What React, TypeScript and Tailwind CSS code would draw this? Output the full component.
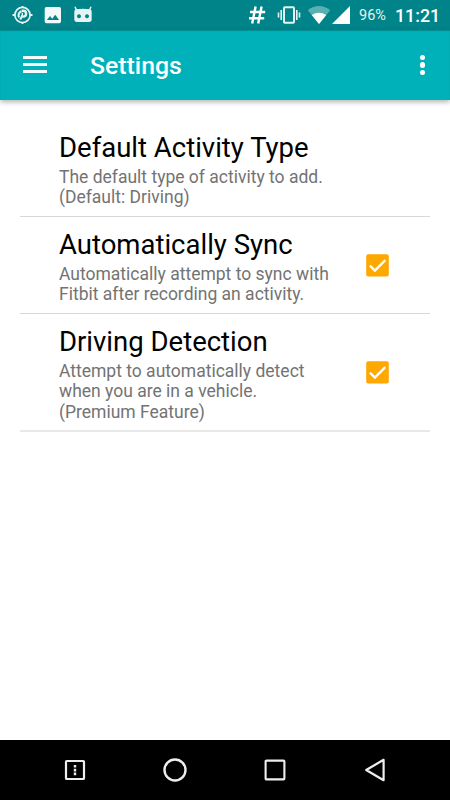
const settings = [
  {
    title: 'Default Activity Type',
    summary: ['The default type of activity to add.', '(Default: Driving)'],
    checkbox: false,
  },
  {
    title: 'Automatically Sync',
    summary: ['Automatically attempt to sync with', 'Fitbit after recording an activity.'],
    checkbox: true,
  },
  {
    title: 'Driving Detection',
    summary: ['Attempt to automatically detect', 'when you are in a vehicle.', '(Premium Feature)'],
    checkbox: true,
  },
];

function StatusBar() {
  return (
    <header className="flex h-[30px] items-center bg-[#008489] text-white">
      {/* Notifications */}
      <svg className="ml-[12px] h-[20px] w-[21px]" viewBox="0 0 21 20" fill="none" stroke="#e6f3f3">
        <circle cx="10.5" cy="10" r="7.6" strokeWidth="1.7" />
        <path d="M0.5 10h2.5M18 10h2.5M10.5 1v2M10.5 17v2" strokeWidth="1.8" />
        <path d="M8.2 14.6L10.4 10.6M7.2 12.4A4.2 4.2 0 0 1 9.4 6.2" strokeWidth="2.1" />
        <path d="M9.6 5.8h1.6a2.8 2.8 0 0 1 0 5.8h-.9" strokeWidth="2.4" />
        <path d="M10.3 7.8v3.2" strokeWidth="1.4" />
      </svg>
      <svg className="ml-[11px] h-[18px] w-[18px]" viewBox="0 0 18 18">
        <path
          fill="#f3f9f9"
          fillRule="evenodd"
          d="M2.5 1h12.7a1.8 1.8 0 0 1 1.8 1.8v12.6a1.8 1.8 0 0 1-1.8 1.8H2.5a1.8 1.8 0 0 1-1.8-1.8V2.8A1.8 1.8 0 0 1 2.5 1zM2.9 14h12.2l-3.9-5.2-3 3.9-2.2-2.6z"
        />
      </svg>
      <svg className="ml-[11px] h-[18px] w-[20px]" viewBox="0 0 20 18">
        <path d="M2 0.8l1.4 3.2M18 0.8L16.6 4" stroke="#e6f3f3" strokeWidth="1.5" />
        <path
          fill="#e6f3f3"
          fillRule="evenodd"
          d="M2.9 3.3q7.1-1.2 14.2 0 1.4.4 1.6 2.2v.8H1.3v-.8q.2-1.8 1.6-2.2zM1.3 6.3h17.4v7q0 2.7-2.7 2.7H4q-2.7 0-2.7-2.7zM6 8.2a2 2 0 1 0 .01 0zM14 8.2a2 2 0 1 0 .01 0z"
        />
      </svg>

      {/* System indicators */}
      <svg className="ml-auto h-[20px] w-[18px]" viewBox="0 0 18 20" fill="none" stroke="#fff" strokeWidth="2.4">
        <path d="M7.6 1.5L4.2 18.5M13.6 1.5l-3.4 17M2 7h15.2M1 13.2h15.2" />
      </svg>
      <svg className="ml-[11px] h-[20px] w-[24px]" viewBox="0 0 24 20" fill="none" stroke="#e6f3f3" strokeWidth="1.6">
        <rect x="7" y="2.3" width="10" height="15.4" rx="0.8" strokeWidth="2" />
        <path d="M4.2 5v10M1.5 7.5v5M19.8 5v10M22.5 7.5v5" />
      </svg>
      <svg className="ml-[6px] h-[20px] w-[24px]" viewBox="0 0 24 20">
        <path d="M12 19L.8 5.2Q12-3 23.2 5.2z" fill="#fff" fillOpacity="0.35" />
        <path d="M12 19L4.7 10Q12 5.5 19.3 10z" fill="#fff" />
      </svg>
      <svg className="h-[18px] w-[19px]" viewBox="0 0 19 18">
        <path d="M1 18L19 0v18z" fill="#fff" />
      </svg>
      <span className="ml-[9px] w-[29px] whitespace-nowrap pt-[2px] text-[14.5px] leading-[30px] text-[#e6f3f3]">96%</span>
      <span className="ml-[7px] w-[55px] whitespace-nowrap pt-px text-[17.8px] font-medium leading-[30px]">11:21</span>
    </header>
  );
}

function AppBar() {
  return (
    <div className="relative flex h-[70px] items-center bg-[#00b1b9] text-white shadow-[inset_0_1px_1px_rgba(0,0,0,0.2),0_2px_5px_rgba(0,0,0,0.3)]">
      <button aria-label="Menu" className="mb-px ml-[23px] flex w-[24px] flex-col gap-[4px]">
        <span className="h-[3px] bg-[#f5fbfb]" />
        <span className="h-[3px] bg-[#f5fbfb]" />
        <span className="h-[3px] bg-[#f5fbfb]" />
      </button>
      <h1 className="ml-[43px] pt-[2px] text-[24.8px] font-medium leading-[30px]">Settings</h1>
      <button aria-label="More options" className="ml-auto mr-[25px] flex flex-col gap-[2.4px]">
        <span className="h-[5.2px] w-[5.2px] rounded-full bg-white" />
        <span className="h-[5.2px] w-[5.2px] rounded-full bg-white" />
        <span className="h-[5.2px] w-[5.2px] rounded-full bg-white" />
      </button>
    </div>
  );
}

function Checkbox() {
  return (
    <svg className="mr-[41px] mb-[3px] h-[23px] w-[23px]" viewBox="0 0 23 23" role="checkbox" aria-checked="true">
      <rect x="0.2" y="0.2" width="22.6" height="22.4" rx="2" fill="#ffa800" />
      <path d="M3.9 11.6l5 5L19.3 6.1" fill="none" stroke="#fff" strokeWidth="2.4" />
    </svg>
  );
}

function NavigationBar() {
  return (
    <nav className="flex h-[60px] items-center justify-center gap-[76px] bg-black">
      <svg className="h-[24px] w-[24px]" viewBox="0 0 24 24" fill="none" stroke="#eee">
        <rect x="3" y="3" width="18" height="18" rx="0.8" strokeWidth="2.2" />
        <path d="M12 7v2.6M12 10.8v2.6M12 14.6v2.6" strokeWidth="2.4" />
      </svg>
      <svg className="h-[24px] w-[24px]" viewBox="0 0 24 24" fill="none" stroke="#eee">
        <circle cx="12" cy="12" r="10.5" strokeWidth="2.4" />
      </svg>
      <svg className="h-[24px] w-[24px]" viewBox="0 0 24 24" fill="none" stroke="#eee">
        <rect x="2.6" y="2.6" width="18.8" height="18.8" rx="0.8" strokeWidth="2.1" />
      </svg>
      <svg className="h-[24px] w-[24px]" viewBox="0 0 24 24" fill="none" stroke="#eee">
        <path d="M20.6 1.8v20.4L3.2 12z" strokeWidth="2.2" strokeLinejoin="round" />
      </svg>
    </nav>
  );
}

export default function App() {
  return (
    <div className="flex h-[800px] w-[450px] flex-col overflow-hidden bg-white font-['Roboto',sans-serif]">
      <StatusBar />
      <AppBar />
      <main className="flex-1 px-5 pt-5">
        {settings.map((setting) => (
          <section
            key={setting.title}
            className="flex items-center justify-between border-b border-[#d8d8d8] pt-[12px] pb-[8.2px] pl-[39px] last:border-b-2 last:border-[#e8e8e8] last:pb-[7.7px]"
          >
            <div className="whitespace-nowrap">
              <h2 className="mb-[2.8px] text-[27.5px] leading-[32px] text-black">{setting.title}</h2>
              {setting.summary.map((line) => (
                <p key={line} className="text-[17.5px] leading-[20.5px] text-[#737373]">
                  {line}
                </p>
              ))}
            </div>
            {setting.checkbox && <Checkbox />}
          </section>
        ))}
      </main>
      <NavigationBar />
    </div>
  );
}
